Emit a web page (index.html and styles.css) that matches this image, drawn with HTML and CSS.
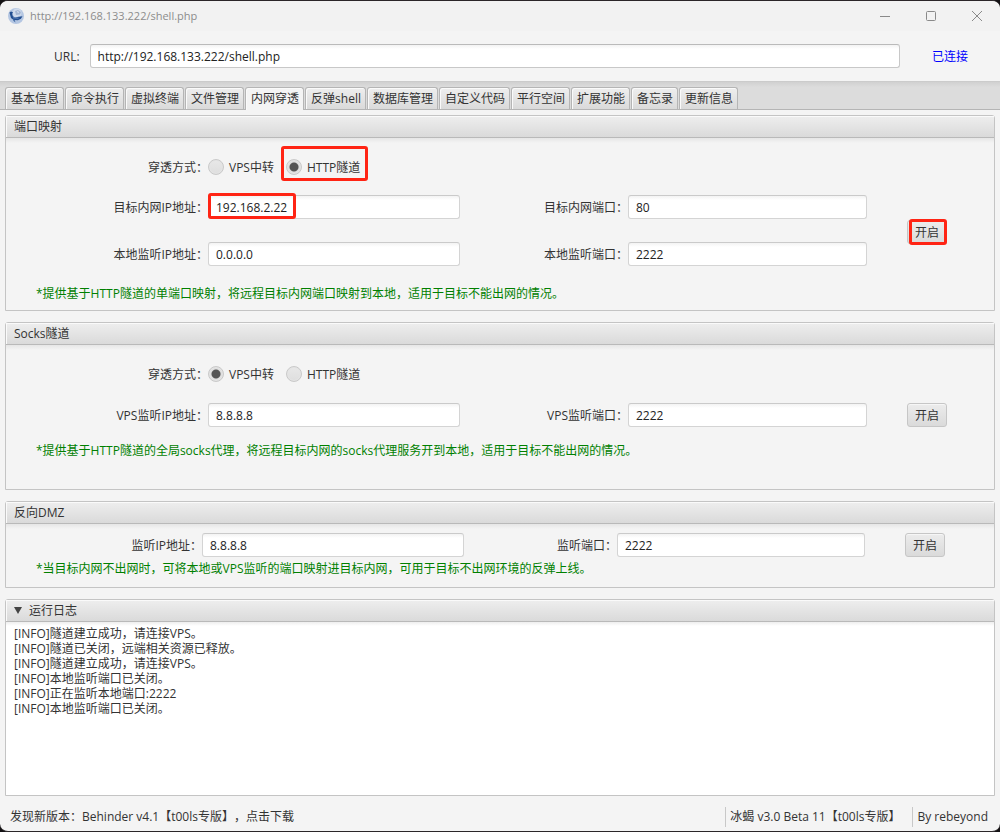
FILE: index.html
```html
<!DOCTYPE html>
<html lang="zh-CN">
<head>
<meta charset="utf-8">
<title>http://192.168.133.222/shell.php</title>
<link rel="stylesheet" href="styles.css">
</head>
<body>
<div class="window">
  <header class="titlebar">
    <svg class="app-icon" viewBox="0 0 16 16" aria-hidden="true">
      <circle cx="8" cy="8" r="8" fill="#b4c6e2"/>
      <circle cx="9" cy="5" r="4.500" fill="#cfdaeb"/>
      <path d="M7 3l3-1 3 2-1 2.500-4 .5z" fill="#a3b5d3"/>
      <path d="M9 3l2 1-1 1z" fill="#eef3fa"/>
      <path d="M1.500 4.500L3 3.500l2 .8-.8 1.400.6 2.600L7 9.500l3.500-.7 4-.6-1.600 2.600-3 1.400-4.200-.2-2.700-2L2 6.500z" fill="#234f91"/>
      <path d="M6.500 11.500l1 3-2.500-2z" fill="#3f69a5"/>
      <path d="M5 9.800l5.500.4" stroke="#7f9fce" stroke-width=".7"/>
    </svg>
    <span class="window-title">http://192.168.133.222/shell.php</span>
    <div class="window-controls">
      <button type="button" aria-label="最小化"><svg viewBox="0 0 12 12"><path d="M1 6.500h10"/></svg></button>
      <button type="button" aria-label="最大化"><svg viewBox="0 0 12 12"><rect x="1.500" y="1.500" width="9" height="9" rx="1"/></svg></button>
      <button type="button" aria-label="关闭"><svg viewBox="0 0 12 12"><path d="M1 1l10 10M11 1L1 11"/></svg></button>
    </div>
  </header>

  <div class="url-bar">
    <label for="url">URL:</label>
    <input class="field" id="url" type="text" value="http://192.168.133.222/shell.php">
    <span class="status">已连接</span>
  </div>

  <nav class="tabs" role="tablist">
    <button type="button" class="tab" role="tab">基本信息</button>
    <button type="button" class="tab" role="tab">命令执行</button>
    <button type="button" class="tab" role="tab">虚拟终端</button>
    <button type="button" class="tab" role="tab">文件管理</button>
    <button type="button" class="tab active" role="tab" aria-selected="true">内网穿透</button>
    <button type="button" class="tab" role="tab">反弹shell</button>
    <button type="button" class="tab" role="tab">数据库管理</button>
    <button type="button" class="tab" role="tab">自定义代码</button>
    <button type="button" class="tab" role="tab">平行空间</button>
    <button type="button" class="tab" role="tab">扩展功能</button>
    <button type="button" class="tab" role="tab">备忘录</button>
    <button type="button" class="tab" role="tab">更新信息</button>
  </nav>

  <main class="panels">
    <section class="panel">
      <h2 class="panel-title">端口映射</h2>
      <div class="panel-body">
        <div class="modes" role="radiogroup" aria-labelledby="map-mode">
          <span class="caption" id="map-mode">穿透方式：</span>
          <label class="mode"><input type="radio" name="map-mode"><span class="mode-text">VPS中转</span></label>
          <label class="mode"><input type="radio" name="map-mode" checked><span class="mode-text">HTTP隧道</span><span class="mark mark-mode"></span></label>
        </div>
        <div class="fields">
          <label class="caption" for="map-ip">目标内网IP地址：</label>
          <div class="cell"><input class="field" id="map-ip" type="text" value="192.168.2.22"><span class="mark mark-ip"></span></div>
          <label class="caption" for="map-port">目标内网端口：</label>
          <input class="field" id="map-port" type="text" value="80">
          <div class="cell action span-rows"><button type="button" class="start">开启</button><span class="mark mark-start"></span></div>
          <label class="caption" for="local-ip">本地监听IP地址：</label>
          <input class="field" id="local-ip" type="text" value="0.0.0.0">
          <label class="caption" for="local-port">本地监听端口：</label>
          <input class="field" id="local-port" type="text" value="2222">
        </div>
        <p class="note">*提供基于HTTP隧道的单端口映射，将远程目标内网端口映射到本地，适用于目标不能出网的情况。</p>
      </div>
    </section>

    <section class="panel">
      <h2 class="panel-title">Socks隧道</h2>
      <div class="panel-body socks">
        <div class="modes" role="radiogroup" aria-labelledby="socks-mode">
          <span class="caption" id="socks-mode">穿透方式：</span>
          <label class="mode"><input type="radio" name="socks-mode" checked><span class="mode-text">VPS中转</span></label>
          <label class="mode"><input type="radio" name="socks-mode"><span class="mode-text">HTTP隧道</span></label>
        </div>
        <div class="fields">
          <label class="caption" for="socks-ip">VPS监听IP地址：</label>
          <input class="field" id="socks-ip" type="text" value="8.8.8.8">
          <label class="caption" for="socks-port">VPS监听端口：</label>
          <input class="field" id="socks-port" type="text" value="2222">
          <div class="action"><button type="button" class="start">开启</button></div>
        </div>
        <p class="note">*提供基于HTTP隧道的全局socks代理，将远程目标内网的socks代理服务开到本地，适用于目标不能出网的情况。</p>
      </div>
    </section>

    <section class="panel">
      <h2 class="panel-title">反向DMZ</h2>
      <div class="panel-body dmz">
        <div class="fields">
          <label class="caption" for="dmz-ip">监听IP地址：</label>
          <input class="field" id="dmz-ip" type="text" value="8.8.8.8">
          <label class="caption" for="dmz-port">监听端口：</label>
          <input class="field" id="dmz-port" type="text" value="2222">
          <div class="action"><button type="button" class="start">开启</button></div>
        </div>
        <p class="note">*当目标内网不出网时，可将本地或VPS监听的端口映射进目标内网，可用于目标不出网环境的反弹上线。</p>
      </div>
    </section>

    <section class="panel log-panel">
      <button type="button" class="panel-title log-toggle" aria-expanded="true">
        <svg viewBox="0 0 8 7" aria-hidden="true"><path d="M0 0h8L4 7z"/></svg>运行日志
      </button>
      <textarea class="log" readonly spellcheck="false" aria-label="运行日志">[INFO]隧道建立成功，请连接VPS。
[INFO]隧道已关闭，远端相关资源已释放。
[INFO]隧道建立成功，请连接VPS。
[INFO]本地监听端口已关闭。
[INFO]正在监听本地端口:2222
[INFO]本地监听端口已关闭。</textarea>
    </section>
  </main>

  <footer class="statusbar">
    <a class="update" href="#">发现新版本：Behinder v4.1【t00ls专版】，点击下载</a>
    <span class="version">冰蝎 v3.0 Beta 11【t00ls专版】</span>
    <span class="author">By rebeyond</span>
  </footer>
</div>
</body>
</html>
```
FILE: styles.css
```css
* {
  box-sizing: border-box;
}

body {
  margin: 0;
  background: #141214;
  color: #333;
  font: 12px/16px "Open Sans", "Noto Sans CJK SC", sans-serif;
  text-spacing-trim: space-all;
}

button,
input,
textarea {
  font: inherit;
  color: inherit;
}

.window {
  display: flex;
  flex-direction: column;
  min-height: 100vh;
  border: solid #2b2629;
  border-width: 1px 0;
  border-radius: 8px;
  background: #f4f4f4;
  overflow: hidden;
}

/* Title bar */
.titlebar {
  display: flex;
  align-items: center;
  height: 30px;
  padding-left: 8px;
  background: #f2f2f2;
}

.app-icon {
  width: 16px;
  height: 16px;
}

.window-title {
  margin-left: 6px;
  color: #8c8c8c;
  font-size: 11px;
}

.window-controls {
  display: flex;
  margin-left: auto;
}

.window-controls button {
  display: grid;
  place-items: center;
  width: 46px;
  height: 30px;
  padding: 0;
  border: 0;
  background: none;
}

.window-controls svg {
  width: 12px;
  height: 12px;
  fill: none;
  stroke: #8a8a8a;
}

/* URL row */
.url-bar {
  display: flex;
  align-items: center;
  height: 50px;
  padding: 0 32px 0 54px;
}

.url-bar label,
.status {
  padding-top: 2px;
}

.url-bar .field {
  flex: 1;
  margin: 0 32px 0 10px;
  border-color: #bababa #c8c8c8 #c8c8c8;
}

.status {
  color: #00f;
}

.field {
  width: 100%;
  min-width: 0;
  height: 24px;
  padding: 0 7px;
  border: 1px solid #d4d4d4;
  border-top-color: #cacaca;
  border-radius: 3px;
  background: linear-gradient(#f3f3f3, #fff 4px);
  color: #222;
  outline: 0;
}

/* Tabs */
.tabs {
  display: flex;
  align-items: flex-end;
  gap: 1px;
  height: 29px;
  padding: 0 5px;
  border: 1px solid #b5b5b5;
  border-width: 1px 0;
  border-top-color: #cbcbcb;
  background: linear-gradient(#d0d0d0, #dcdcdc 5px);
}

.tab {
  height: 22px;
  padding: 0 4px 0 5px;
  border: 1px solid #b5b5b5;
  border-bottom: 0;
  border-radius: 3px 3px 0 0;
  background: linear-gradient(#eee, #dadada);
  box-shadow: inset 1px 1px #fafafa;
  white-space: nowrap;
}

.tab.active {
  height: 23px;
  margin-bottom: -1px;
  background: #f4f4f4;
}

/* Titled panels */
.panels {
  display: flex;
  flex: 1;
  flex-direction: column;
  gap: 11px;
  padding: 5px 5px 0;
}

.panel {
  border: 1px solid #c4c4c4;
  border-radius: 3px 3px 0 0;
}

.panel-title {
  width: 100%;
  height: 22px;
  margin: 0;
  padding: 0 8px;
  border: 0;
  border-bottom: 1px solid #b9b9b9;
  background: linear-gradient(#eee, #dadada);
  box-shadow: inset 1px 1px #fafafa;
  font-size: 12px;
  font-weight: 400;
  line-height: 22px;
  text-align: left;
}

.panel-body {
  padding: 17px 0 8px;
  background: linear-gradient(#e6e6e6, #f4f4f4 5px);
}

.modes {
  display: flex;
  align-items: center;
  gap: 12px;
  height: 24px;
  margin-bottom: 16px;
}

.modes .caption {
  width: 202px;
  margin-right: -12px;
}

.caption {
  padding-top: 2px;
  text-align: right;
  white-space: nowrap;
}

.mode {
  position: relative;
  display: flex;
  align-items: center;
  gap: 5px;
}

.mode-text {
  padding-top: 2px;
}

.mode input {
  appearance: none;
  width: 16px;
  height: 16px;
  margin: 0;
  border: 1px solid #c9c9c9;
  border-radius: 50%;
  background: linear-gradient(#e8e8e8, #dedede);
  box-shadow: inset 0 0 0 1px #e4e4e4;
}

.mode input:checked {
  background: radial-gradient(circle, #555 4px, #dfdfdf 5px);
}

.fields {
  display: grid;
  grid-template-columns: 202px 252fr 168px 239fr 80px;
  align-items: center;
  row-gap: 23px;
  padding-right: 47px;
}

.cell {
  position: relative;
  display: flex;
}

.action {
  justify-self: end;
}

.span-rows {
  grid-area: 1 / 5 / span 2;
  margin-top: 2px;
}

.start {
  display: block;
  width: 40px;
  height: 24px;
  padding: 2px 0 0;
  border: 1px solid #c6c6c6;
  border-radius: 3px;
  background: linear-gradient(#ececec, #dadada);
  box-shadow: inset 0 1px #f6f6f6;
}

.note {
  margin: 20px 30px 0;
  color: #008000;
}

.socks {
  padding-bottom: 30px;
}

.socks .modes {
  margin-bottom: 17px;
}

.socks .note {
  margin-top: 16px;
}

.dmz {
  padding: 9px 0 10px;
}

.dmz .fields {
  grid-template-columns: 196px 262fr 153px 248fr 80px;
  padding-right: 49px;
}

.dmz .note {
  margin-top: 4px;
}

/* Red highlight frames */
.mark {
  position: absolute;
  border: 3px solid #ff2414;
  border-radius: 3px;
  pointer-events: none;
}

.mark-mode {
  inset: -12px -8px -5px -5px;
}

.mark-ip {
  top: -2px;
  left: 0;
  width: 88px;
  height: 26px;
}

.mark-start {
  inset: -1px 0 -1px 2px;
}

/* Log */
.log-panel {
  display: flex;
  flex: 1;
  flex-direction: column;
}

.log-toggle {
  display: flex;
  align-items: center;
  gap: 7px;
}

.log-toggle svg {
  width: 8px;
  height: 7px;
  fill: #444;
}

.log {
  flex: 1;
  width: 100%;
  padding: 4px 8px;
  border: 0;
  background: linear-gradient(#eee, #fff 4px);
  line-height: 15px;
  resize: none;
  outline: 0;
}

/* Status bar */
.statusbar {
  display: flex;
  align-items: center;
  height: 35px;
  padding: 6px 12px 0 10px;
}

.update {
  flex: 1;
  color: inherit;
  text-decoration: none;
}

.version,
.author {
  padding-left: 4px;
  border-left: 1px solid #c8c8c8;
  line-height: 20px;
}

.version {
  padding-right: 12px;
}
```
